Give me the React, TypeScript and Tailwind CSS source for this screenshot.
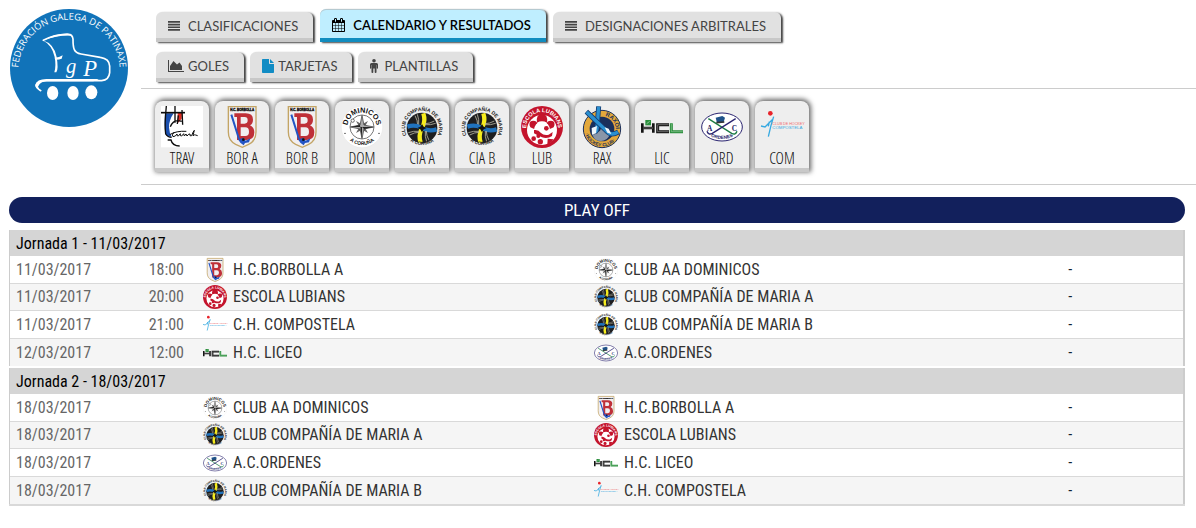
import { useId } from "react";
import type { ReactNode } from "react";

type TeamId = "trav" | "bor" | "dom" | "cia" | "lub" | "rax" | "lic" | "ord" | "com";

/* Text that runs along an arc inside a crest */
function ArcText({
  d,
  size,
  fill,
  weight = 700,
  children,
}: {
  d: string;
  size: number;
  fill: string;
  weight?: number;
  children: string;
}) {
  const id = useId();
  return (
    <>
      <path id={id} d={d} fill="none" />
      <text fontSize={size} fill={fill} fontWeight={weight} textAnchor="middle">
        <textPath href={`#${id}`} startOffset="50%">
          {children}
        </textPath>
      </text>
    </>
  );
}

function TravCrest() {
  return (
    <>
      <rect width="126" height="124" fill="#fff" />
      <path d="M12 22h26q-14 20-14 42q1 18 8 28q-14 2-18-8q-5-20-2-62z" fill="#1a4fae" />
      <path d="M50 20h13l-1 18l-12 14z" fill="#e02a20" />
      <path d="M0 20h72" stroke="#0c0c0c" strokeWidth="5" />
      <path
        d="M16 0q-6 60-2 84q6 10 18 10M42 0v50M52 28l-3 26M63 12l2 44M28 62q10-24 34-16M20 102h10q4 18 26 18"
        stroke="#0c0c0c"
        strokeWidth="4"
        fill="none"
      />
      <path
        d="M26 86q20-12 50-10M40 78q-10 10-4 14q8 0 12-8q0 8 4 6l6-7q-2 8 4 7l6-7l2 7l5-6l3 6q6-8 9-6q-2 8 5 5q5-14 8-16l-4 16q5-4 8-2l6 2"
        stroke="#0c0c0c"
        strokeWidth="3"
        fill="none"
      />
    </>
  );
}

function BorCrest() {
  return (
    <>
      <path d="M22 2h83v76q0 26-22 37l-19 9l-20-9Q22 104 22 78z" fill="#f1eef0" stroke="#c3a566" strokeWidth="4" />
      <text x="63.5" y="16" fontSize="9" fontWeight="700" textAnchor="middle" fill="#111" stroke="#111">
        H.C. BORBOLLA
      </text>
      <path
        d="M40 22h34q22 0 22 19q0 12-9 17q13 6 13 21q0 23-24 23H48V33h-8zm19 11v20h12q9 0 9-10t-9-10zm0 31v26h14q11 0 11-13t-11-13z"
        fill="#bf3038"
        fillRule="evenodd"
      />
      <path d="M31 26l22 70q3 10 12 6" stroke="#2354c4" strokeWidth="6" fill="none" />
      <path d="M52 101l14-6l8 9l14-7l-4 12l-12 2l-4 7l-10-8z" fill="#2354c4" />
      <circle cx="67" cy="101" r="4" fill="#141414" />
    </>
  );
}

function DomCrest() {
  return (
    <>
      <circle cx="63" cy="63" r="62" fill="#fff" stroke="#ddd" />
      <circle cx="63" cy="63" r="36" fill="#fff" stroke="#333" strokeWidth="2" />
      <ArcText d="M21 77A44 44 0 1 1 105 77" size={22} fill="#111">
        DOMINICOS
      </ArcText>
      <ArcText d="M11 82A56 56 0 0 0 115 82" size={15} fill="#111">
        A CORUÑA
      </ArcText>
      <circle cx="12" cy="82" r="2" fill="#111" />
      <circle cx="114" cy="82" r="2" fill="#111" />
      <circle cx="35" cy="44" r="5" fill="#fff" stroke="#333" strokeWidth="2" />
      <path d="M45 45l18 10l18-10l-10 18l10 18l-18-10l-18 10l10-18z" fill="#666" />
      <path d="M63 28l6 29l29 6l-29 6l-6 29l-6-29l-29-6l29-6z" fill="#aaa" stroke="#333" strokeWidth="2" />
      <path d="M63 28v35h35l-29 6l-6-6zM63 98V63H28l29-6z" fill="#222" />
    </>
  );
}

/* One arm of the windmill, reused in four directions */
function Blade({ fill, turn }: { fill: string; turn: number }) {
  return (
    <g transform={`rotate(${turn} 63 66)`} fill="none">
      <path d="M67 22q7 21-2 40" stroke={fill} strokeWidth="13" />
      <path d="M49 25q6 16 4 32M42 29q8 14 8 28" stroke="#b9b7a2" strokeWidth="2.5" />
    </g>
  );
}

function CiaCrest() {
  return (
    <>
      <circle cx="63" cy="66" r="46" fill="#1d1e20" />
      <Blade fill="#f6ec1e" turn={0} />
      <Blade fill="#1f72bd" turn={90} />
      <Blade fill="#f6ec1e" turn={180} />
      <Blade fill="#1f72bd" turn={270} />
      <path d="M63 54l5 8l9 4l-9 4l-5 9l-5-9l-9-4l9-4z" fill="#111" />
      <ArcText d="M20 93A51 51 0 1 1 106 93" size={15} fill="#222">
        CLUB COMPAÑÍA DE MARIA
      </ArcText>
      <ArcText d="M18 96A59 59 0 0 0 108 96" size={14} fill="#222">
        A CORUÑA
      </ArcText>
    </>
  );
}

function LubCrest() {
  return (
    <>
      <circle cx="63" cy="63" r="63" fill="#c4142c" />
      <circle cx="63" cy="72" r="45" fill="#fff" />
      <ArcText d="M16 76A48 48 0 1 1 110 76" size={17} fill="#fff">
        ESCOLA LUBIANS
      </ArcText>
      <path d="M28 64q-8-20 8-20q14 0 13 12l-8 14zM98 64q8-20-8-20q-14 0-13 12l8 14z" fill="#c4142c" />
      <path d="M48 50q-4-26 15-26t15 26q-15-8-30 0z" fill="#c4142c" />
      <path d="M38 76q2-28 25-28t25 28l-12 16l-22-2z" fill="#fff" />
      <path d="M39 72q14-2 20 8q10 10 24 6l12-8l-2 12q-14 10-30 4q-14-6-24-12z" fill="#c4142c" />
      <circle cx="76" cy="67" r="7" fill="#c4142c" />
      <circle cx="38" cy="98" r="7" fill="#c4142c" />
      <circle cx="52" cy="90" r="6" fill="#c4142c" />
      <circle cx="58" cy="107" r="8" fill="#c4142c" />
      <path d="M80 98l17 2q-3 10-18 16z" fill="#c4142c" />
    </>
  );
}

function RaxCrest() {
  return (
    <>
      <circle cx="63" cy="69" r="56" fill="#e3a83b" stroke="#1b2f5c" strokeWidth="3" />
      <circle cx="63" cy="69" r="37" fill="#1b2f5c" />
      <path d="M34 86l8-6l4-10l5 8l6-4l6-14l5 14l7-4l4 10l8 5q-8 20-27 20t-26-19z" fill="#8a96a8" />
      <ArcText d="M66 29A41 41 0 0 1 104 76" size={17} fill="#1b2f5c">
        RAXOI
      </ArcText>
      <ArcText d="M12 58A52 52 0 0 0 114 80" size={14} fill="#1b2f5c">
        ·HOCKEY CLUB·
      </ArcText>
      <path d="M53 1L48 68q-1 12-11 8" stroke="#143b70" strokeWidth="15" fill="none" />
      <path d="M53 2L48 68q-1 12-11 8" stroke="#2a8fd0" strokeWidth="10" fill="none" />
      <path d="M16 17L80 78q12 12 32 0" stroke="#143b70" strokeWidth="15" fill="none" />
      <path d="M17 18L80 78q12 12 31 0" stroke="#2a8fd0" strokeWidth="10" fill="none" />
      <path d="M32 66l16-6l-3 22l-12 4zM71 64l12 4l8 16l-12-4z" fill="#eef6fc" />
    </>
  );
}

function LicCrest() {
  return (
    <>
      <path d="M4 52v28M37 52v28M4 66h33" stroke="#141414" strokeWidth="8" fill="none" />
      <path d="M84 56H50v21h34" stroke="#141414" strokeWidth="9" fill="none" />
      <path d="M6 66h30M83 56H50v21h33" stroke="#bbb" strokeWidth="1.5" fill="none" />
      <path d="M91 52v25h35" stroke="#2b8f3d" strokeWidth="9" fill="none" />
      <path d="M91 54v23h34" stroke="#b5dcb9" strokeWidth="1.5" fill="none" />
      <path d="M13 42h17v16H13z" fill="#2b8f3d" />
      <path d="M17 53l9-7" stroke="#bfe3c4" strokeWidth="2" />
    </>
  );
}

function OrdCrest() {
  return (
    <>
      <ellipse cx="63" cy="63" rx="61" ry="42" fill="#fff" stroke="#2a2470" strokeWidth="3" />
      <path d="M22 38l70 44q12 6 16-6" stroke="#1b7c44" strokeWidth="4" fill="none" />
      <path d="M104 38L34 82q-12 6-16-6" stroke="#2a2470" strokeWidth="4" fill="none" />
      <path d="M44 35l20-5l8 5l-4 14l-20 2z" fill="#1f5289" />
      <path d="M46 50l24-2" stroke="#333" strokeWidth="5" />
      <text x="18" y="76" fontSize="22" fontWeight="700" fill="#221c66" fontFamily="Liberation Serif, serif">
        A
      </text>
      <text x="92" y="76" fontSize="22" fontWeight="700" fill="#221c66" fontFamily="Liberation Serif, serif">
        C
      </text>
      <ArcText d="M20 86Q63 112 106 86" size={14} fill="#221c66">
        ORDENES
      </ArcText>
    </>
  );
}

function ComCrest() {
  return (
    <>
      <circle cx="28" cy="22" r="7" fill="#e8232a" />
      <path d="M0 60l12 3l24-24M38 32l-8 26l-8 34M25 47l-3 14" stroke="#36a9e1" strokeWidth="4" fill="none" />
      <text x="34" y="56" fontSize="11" fill="#ee6a6a">
        CLUB DE HOCKEY
      </text>
      <text x="34" y="68" fontSize="13" fill="#36a9e1">
        COMPOSTELA
      </text>
    </>
  );
}

const crests: Record<TeamId, () => ReactNode> = {
  trav: TravCrest,
  bor: BorCrest,
  dom: DomCrest,
  cia: CiaCrest,
  lub: LubCrest,
  rax: RaxCrest,
  lic: LicCrest,
  ord: OrdCrest,
  com: ComCrest,
};

function Crest({ team, className }: { team: TeamId; className: string }) {
  const Drawing = crests[team];
  return (
    <svg
      viewBox="0 0 126 126"
      className={`shrink-0 overflow-visible font-['Liberation_Sans',sans-serif] ${className}`}
      aria-hidden="true"
    >
      <Drawing />
    </svg>
  );
}

function FederationLogo() {
  return (
    <svg
      viewBox="0 0 354 354"
      className="size-[118px] font-['Open_Sans',sans-serif]"
      role="img"
      aria-label="Federación Galega de Patinaxe"
    >
      <circle cx="177" cy="177" r="177" fill="#1173b9" />
      <ArcText d="M25 184A152 152 0 0 1 329 184" size={28} fill="#fff" weight={400}>
        FEDERACIÓN GALEGA DE PATINAXE
      </ArcText>
      <path
        d="M100 94q34-19 75-18q12 0 14 14q0 24 4 32q4 10 20 13l58 10q27 4 28 26v20q-2 22-24 24H108q-28 2-30 14q0 8 14 16"
        fill="none"
        stroke="#fff"
        strokeWidth="5"
        strokeLinejoin="round"
        strokeLinecap="round"
      />
      <path d="M100 94q36-22 78-20l8 6q-40-3-86 14zM76 228q4-20 40-18h150q-8 7-24 7H116q-24-2-32 16q2 7 12 13q-18-4-20-18z" fill="#fff" />
      <path d="M98 94q34 10 42 50q6 36-1 46l-6 0q6-20 1-46q-8-36-36-50z" fill="#fff" />
      <path d="M134 146q14 0 24-7l-3 10q-10 4-19 3z" fill="#fff" />
      <text x="168" y="192" fontSize="62" fontStyle="italic" fill="#fff" fontFamily="Liberation Serif, serif">
        g
      </text>
      <text x="220" y="200" fontSize="68" fontStyle="italic" fill="#fff" fontFamily="Liberation Serif, serif">
        P
      </text>
      <ellipse cx="128" cy="252" rx="17" ry="21" fill="#fff" />
      <ellipse cx="189" cy="252" rx="17" ry="21" fill="#fff" />
      <ellipse cx="244" cy="250" rx="18" ry="21" fill="#fff" />
    </svg>
  );
}

function LinesIcon() {
  return (
    <svg viewBox="0 0 12 10" className="mr-2 h-[10px] w-3" aria-hidden="true">
      <path d="M0 0h12v1.700H0zM0 2.700h12v1.700H0zM0 5.400h12v1.700H0zM0 8.100h12v1.700H0z" fill="currentColor" />
    </svg>
  );
}

function CalendarIcon() {
  return (
    <svg viewBox="64 0 1664 1792" className="mr-2 h-[14px] w-[13px]" aria-hidden="true">
      <path
        fill="currentColor"
        d="M192 1664h288v-288h-288v288zm352 0h320v-288h-320v288zm-352-352h288v-320h-288v320zm352 0h320v-320h-320v320zm-352-384h288v-288h-288v288zm736 736h320v-288h-320v288zm-384-736h320v-288h-320v288zm768 736h288v-288h-288v288zm-384-352h320v-320h-320v320zm-352-864v-288q0-13-9.5-22.5t-22.5-9.5h-64q-13 0-22.5 9.5t-9.5 22.5v288q0 13 9.5 22.5t22.5 9.5h64q13 0 22.5-9.5t9.5-22.5zm736 864h288v-320h-288v320zm-384-384h320v-288h-320v288zm384 0h288v-288h-288v288zm32-480v-288q0-13-9.5-22.5t-22.5-9.5h-64q-13 0-22.5 9.5t-9.5 22.5v288q0 13 9.5 22.5t22.5 9.5h64q13 0 22.5-9.5t9.5-22.5zm384-64v1280q0 52-38 90t-90 38h-1408q-52 0-90-38t-38-90v-1280q0-52 38-90t90-38h128v-96q0-66 47-113t113-47h64q66 0 113 47t47 113v96h384v-96q0-66 47-113t113-47h64q66 0 113 47t47 113v96h128q52 0 90 38t38 90z"
      />
    </svg>
  );
}

function AreaChartIcon() {
  return (
    <svg viewBox="0 0 16 12" className="mr-1 h-3 w-4" aria-hidden="true">
      <path d="M0 0h1v11h15v1H0z" fill="currentColor" />
      <path d="M2 10V6l3.500-5L9 4.500l2.500-2L14 6v4z" fill="currentColor" />
    </svg>
  );
}

function FileIcon() {
  return (
    <svg viewBox="0 0 12 14" className="mr-1 h-[14px] w-3 text-[#118cc4]" aria-hidden="true">
      <path d="M.8 0H7v4.200q0 .8.8.8H12v8.200q0 .8-.8.8H.8q-.8 0-.8-.8V.8Q0 0 .8 0zM8 0l4 4H8z" fill="currentColor" />
    </svg>
  );
}

function PersonIcon() {
  return (
    <svg viewBox="0 0 8 14" className="mr-1.5 h-[14px] w-2" aria-hidden="true">
      <circle cx="4" cy="1.800" r="1.800" fill="currentColor" />
      <path
        d="M1.500 4h5Q8 4 8 5.500V9q0 .7-.6.7T6.800 9V6h-.3v7.200q0 .8-.9.800t-.9-.8V9.500h-1.400v3.700q0 .8-.9.800t-.9-.8V6H1.200v3q0 .7-.6.7T0 9V5.500Q0 4 1.500 4z"
        fill="currentColor"
      />
    </svg>
  );
}

function Tab({ icon, active = false, children }: { icon: ReactNode; active?: boolean; children: string }) {
  const look = active
    ? "h-[33px] border-b-[#118cbf] bg-[#bfeeff] font-semibold text-black shadow-[inset_0_1px_0_#b5c9d0,2px_1px_2px_#444]"
    : "h-[30px] border-b-[#c8c8c8] bg-[#e1e1e1] text-[#444] shadow-[2px_1px_2px_#444]";
  return (
    <a
      href="#"
      aria-current={active ? "page" : undefined}
      className={`flex items-center rounded-t-md border-b-4 pt-[2px] pr-[15px] pl-3 text-[13px] leading-5 whitespace-nowrap ${look}`}
    >
      {icon}
      {children}
    </a>
  );
}

const clubs: { team: TeamId; label: string }[] = [
  { team: "trav", label: "TRAV" },
  { team: "bor", label: "BOR A" },
  { team: "bor", label: "BOR B" },
  { team: "dom", label: "DOM" },
  { team: "cia", label: "CIA A" },
  { team: "cia", label: "CIA B" },
  { team: "lub", label: "LUB" },
  { team: "rax", label: "RAX" },
  { team: "lic", label: "LIC" },
  { team: "ord", label: "ORD" },
  { team: "com", label: "COM" },
];

type Side = { team: TeamId; name: string };
type Match = { date: string; time: string; home: Side; away: Side };

const borA: Side = { team: "bor", name: "H.C.BORBOLLA A" };
const dominicos: Side = { team: "dom", name: "CLUB AA DOMINICOS" };
const lubians: Side = { team: "lub", name: "ESCOLA LUBIANS" };
const ciaA: Side = { team: "cia", name: "CLUB COMPAÑÍA DE MARIA A" };
const ciaB: Side = { team: "cia", name: "CLUB COMPAÑÍA DE MARIA B" };
const compostela: Side = { team: "com", name: "C.H. COMPOSTELA" };
const liceo: Side = { team: "lic", name: "H.C. LICEO" };
const ordenes: Side = { team: "ord", name: "A.C.ORDENES" };

const rounds: { title: string; matches: Match[] }[] = [
  {
    title: "Jornada 1 - 11/03/2017",
    matches: [
      { date: "11/03/2017", time: "18:00", home: borA, away: dominicos },
      { date: "11/03/2017", time: "20:00", home: lubians, away: ciaA },
      { date: "11/03/2017", time: "21:00", home: compostela, away: ciaB },
      { date: "12/03/2017", time: "12:00", home: liceo, away: ordenes },
    ],
  },
  {
    title: "Jornada 2 - 18/03/2017",
    matches: [
      { date: "18/03/2017", time: "", home: dominicos, away: borA },
      { date: "18/03/2017", time: "", home: ciaA, away: lubians },
      { date: "18/03/2017", time: "", home: ordenes, away: liceo },
      { date: "18/03/2017", time: "", home: ciaB, away: compostela },
    ],
  },
];

function TeamCell({ side }: { side: Side }) {
  return (
    <td className="p-0">
      <div className="flex items-center gap-[6px] whitespace-nowrap text-[#333]">
        <Crest team={side.team} className="size-6" />
        {side.name}
      </div>
    </td>
  );
}

function RoundTable({ title, matches }: { title: string; matches: Match[] }) {
  return (
    <table className="w-full table-fixed border-separate border-spacing-0 border-r-2 border-l border-[#ccc] text-base leading-5">
      <colgroup>
        <col className="w-[100px]" />
        <col className="w-[93px]" />
        <col className="w-1/3" />
        <col className="w-[31%]" />
        <col />
      </colgroup>
      <thead>
        <tr className="h-[26px] bg-[#d5d5d5]">
          <th colSpan={5} className="px-[6px] pt-[2px] pb-0 text-left font-normal text-black">
            {title}
          </th>
        </tr>
      </thead>
      <tbody>
        {matches.map((match, index) => (
          <tr
            key={index}
            className="h-7 even:h-[27px] even:bg-[#f5f5f5] [&:not(:last-child)>td]:border-b [&>td]:border-[#d9d9d9]"
          >
            <td className="px-[6px] py-0 text-[#666]">{match.date}</td>
            <td className="py-0 pr-[19px] pl-0 text-right text-[#666]">{match.time}</td>
            <TeamCell side={match.home} />
            <TeamCell side={match.away} />
            <td className="p-0 text-center text-[#123]">-</td>
          </tr>
        ))}
      </tbody>
    </table>
  );
}

export default function App() {
  return (
    <div className="bg-white font-['Lato',sans-serif]">
      <header className="flex">
        <div className="w-[141px] shrink-0 pt-[9px] pl-[10px]">
          <FederationLogo />
        </div>
        <div className="min-w-0 grow">
          <nav className="flex flex-col gap-[10px] border-b border-[#ccc] px-[15px] pt-[9px] pb-[6px]">
            <div className="flex items-end gap-[7px]">
              <Tab icon={<LinesIcon />}>CLASIFICACIONES</Tab>
              <Tab icon={<CalendarIcon />} active>
                CALENDARIO Y RESULTADOS
              </Tab>
              <Tab icon={<LinesIcon />}>DESIGNACIONES ARBITRALES</Tab>
            </div>
            <div className="flex items-end gap-[6px]">
              <Tab icon={<AreaChartIcon />}>GOLES</Tab>
              <Tab icon={<FileIcon />}>TARJETAS</Tab>
              <Tab icon={<PersonIcon />}>PLANTILLAS</Tab>
            </div>
          </nav>
          <nav className="flex flex-wrap gap-[6px] border-b border-[#ccc] px-[14px] pt-3 pb-3">
            {clubs.map((club) => (
              <a
                key={club.label}
                href="#"
                className="flex h-[71px] w-[54px] flex-col items-center rounded-t-lg border-b-4 border-[#c8c8c8] bg-[#eee] pt-[5px] font-['Open_Sans_Condensed_Light','Roboto_Condensed',sans-serif] text-base leading-5 font-light text-[#111] shadow-[1px_-1px_5px_1px_#666]"
              >
                <Crest team={club.team} className="size-[42px]" />
                {club.label}
              </a>
            ))}
          </nav>
        </div>
      </header>
      <main className="pt-3 pr-[11px] pl-[9px] font-['Roboto_Condensed',Roboto,sans-serif]">
        <h1 className="mb-[7px] rounded-full bg-[#12205c] text-center text-[17px] leading-[26px] text-white">PLAY OFF</h1>
        <div className="flex flex-col gap-[2px] border-b-2 border-[#d9d9d9]">
          {rounds.map((round) => (
            <RoundTable key={round.title} title={round.title} matches={round.matches} />
          ))}
        </div>
      </main>
    </div>
  );
}
